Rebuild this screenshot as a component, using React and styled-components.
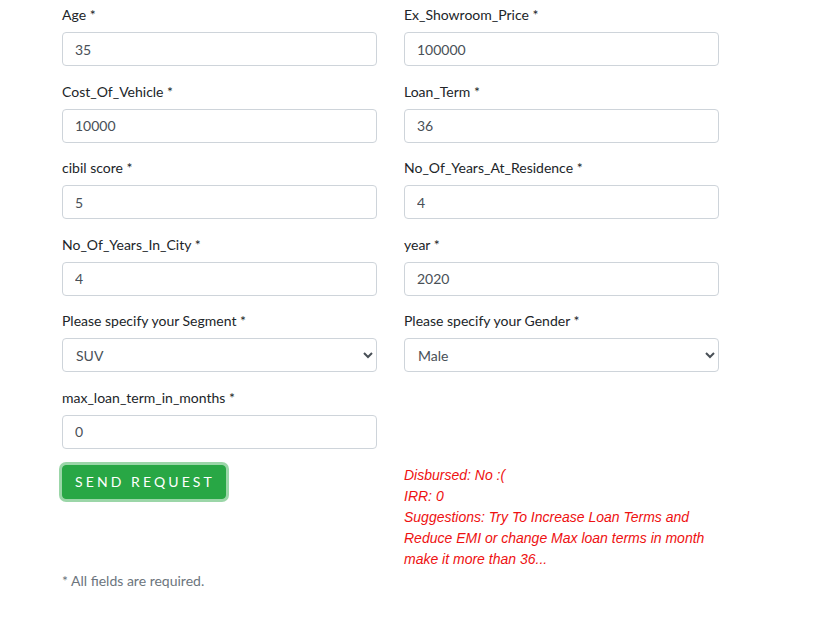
import React from 'react';
import styled, { createGlobalStyle } from 'styled-components';

const GlobalStyle = createGlobalStyle`
    body {
        margin: 0;
        background: #fff;
        font-family: Lato, "Open Sans", sans-serif;
        color: #212529;
    }
`;

const Page = styled.div`
    padding: 4px 0 0 62px;
    width: 657px;
`;

const FormGrid = styled.div`
    display: grid;
    grid-template-columns: 315px 315px;
    column-gap: 27px;
    row-gap: 14.6px;
`;

const Field = styled.div`
    display: flex;
    flex-direction: column;
`;

const Label = styled.label`
    font-size: 14px;
    line-height: 21px;
    margin-bottom: 7px;
    color: #212529;
`;

const Input = styled.input`
    box-sizing: border-box;
    width: 100%;
    height: 34px;
    padding: 0 12px;
    font-family: Lato, sans-serif;
    font-size: 14px;
    color: #495057;
    background: #fff;
    border: 1px solid #ced4da;
    border-radius: 4px;
    outline: none;
`;

const Select = styled.select`
    box-sizing: border-box;
    width: 100%;
    height: 34px;
    padding: 0 9px;
    font-family: Lato, sans-serif;
    font-size: 14px;
    color: #495057;
    background: #fff;
    border: 1px solid #ced4da;
    border-radius: 4px;
    outline: none;
`;

const ActionRow = styled.div`
    display: grid;
    grid-template-columns: 315px 315px;
    column-gap: 27px;
    margin-top: 16px;
`;

const SendButton = styled.button`
    justify-self: start;
    height: 34px;
    padding: 0 10px 0 12px;
    font-family: Lato, sans-serif;
    font-size: 14px;
    letter-spacing: 3.1px;
    color: #fff;
    background: #28a745;
    border: 1px solid #28a745;
    border-radius: 4px;
    box-shadow: 0 0 0 3px rgba(72, 180, 97, 0.55);
`;

const Result = styled.div`
    font-family: "Liberation Sans", Arial, sans-serif;
    font-style: italic;
    font-size: 14px;
    line-height: 21px;
    color: #ee1111;
`;

const Footer = styled.p`
    margin: 0;
    font-size: 14px;
    line-height: 21px;
    color: #6c757d;
`;

const fields = [
    { label: 'Age', value: '35' },
    { label: 'Ex_Showroom_Price', value: '100000' },
    { label: 'Cost_Of_Vehicle', value: '10000' },
    { label: 'Loan_Term', value: '36' },
    { label: 'cibil score', value: '5' },
    { label: 'No_Of_Years_At_Residence', value: '4' },
    { label: 'No_Of_Years_In_City', value: '4' },
    { label: 'year', value: '2020' },
    { label: 'Please specify your Segment', select: ['SUV'] },
    { label: 'Please specify your Gender', select: ['Male'] },
    { label: 'max_loan_term_in_months', value: '0' },
];

export default function App() {
    return (
        <Page>
            <GlobalStyle />
            <FormGrid>
                {fields.map((f) => (
                    <Field key={f.label}>
                        <Label>{f.label} *</Label>
                        {f.select ? (
                            <Select defaultValue={f.select[0]}>
                                {f.select.map((o) => (
                                    <option key={o}>{o}</option>
                                ))}
                            </Select>
                        ) : (
                            <Input defaultValue={f.value} />
                        )}
                    </Field>
                ))}
            </FormGrid>
            <ActionRow>
                <SendButton>SEND REQUEST</SendButton>
                <Result>
                    Disbursed: No :(<br />
                    IRR: 0<br />
                    Suggestions: Try To Increase Loan Terms and Reduce EMI or change Max loan terms in month make it more than 36...
                </Result>
            </ActionRow>
            <Footer>* All fields are required.</Footer>
        </Page>
    );
}
